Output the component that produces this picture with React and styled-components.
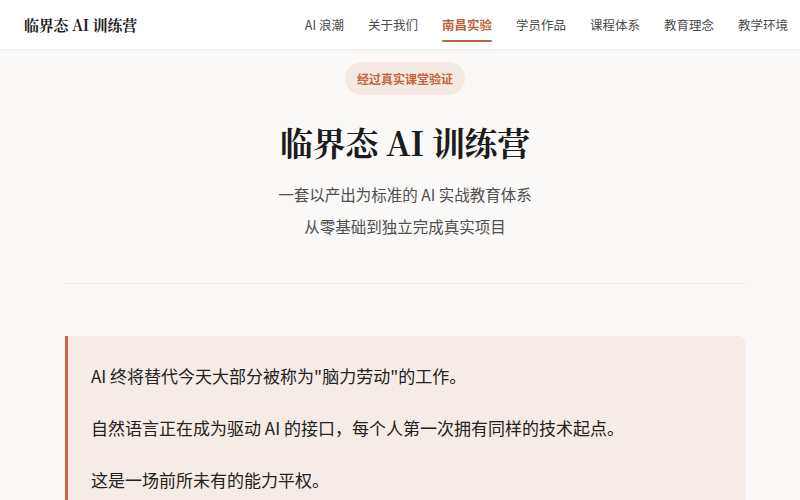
import React from "react";
import styled, { createGlobalStyle } from "styled-components";

const Global = createGlobalStyle`
  html, body { margin: 0; padding: 0; }
  body {
    background: #faf9f8;
    font-family: "Noto Sans CJK SC", "Noto Sans", sans-serif;
    color: #222;
  }
`;

const Header = styled.header`
  height: 50px;
  background: #ffffff;
  border-bottom: 1px solid #eeeceb;
  box-shadow: 0 1px 4px rgba(0,0,0,0.03);
  display: flex;
  align-items: center;
  justify-content: space-between;
  padding: 0 12px 0 24px;
  box-sizing: border-box;
`;

const Logo = styled.div`
  font-family: "Noto Serif CJK SC", "Liberation Serif", "Noto Sans CJK SC", serif;
  font-weight: 700;
  font-size: 15px;
  color: #1c1c1c;
  letter-spacing: -0.2px;
`;

const Nav = styled.nav`
  display: flex;
  align-items: center;
  gap: 24px;
  height: 100%;
`;

const NavItem = styled.a`
  position: relative;
  font-size: 12.5px;
  color: ${p => (p.$active ? "#c0653c" : "#4a4a4a")};
  font-weight: ${p => (p.$active ? 700 : 400)};
  text-decoration: none;
  line-height: 20px;
  &::after {
    content: "";
    display: ${p => (p.$active ? "block" : "none")};
    position: absolute;
    left: 0;
    right: 0;
    bottom: -7px;
    height: 2px;
    background: #c0653c;
    border-radius: 1px;
  }
`;

const Main = styled.main`
  padding-left: 10px;
`;

const Container = styled.div`
  max-width: 680px;
  margin: 0 auto;
  display: flex;
  flex-direction: column;
  align-items: center;
`;

const Badge = styled.div`
  margin-top: 12px;
  padding: 8px 12px;
  font-size: 12px;
  line-height: 17px;
  font-weight: 700;
  color: #c0653c;
  background: #f6e9e2;
  border-radius: 17px;
`;

const Title = styled.h1`
  margin: 25px 0 0;
  font-family: "Noto Serif CJK SC", "Liberation Serif", "Noto Sans CJK SC", serif;
  font-size: 33px;
  line-height: 43px;
  font-weight: 700;
  color: #1c1c1c;
  letter-spacing: -0.3px;
`;

const Subtitle = styled.p`
  margin: 15px 0 0;
  font-size: 15.5px;
  line-height: 32px;
  color: #4f4f4f;
  text-align: center;
`;

const Divider = styled.hr`
  align-self: stretch;
  margin: 41px 0 0;
  border: 0;
  height: 1px;
  background: #eeecea;
`;

const Card = styled.section`
  align-self: stretch;
  margin-top: 52px;
  background: #f5ece7;
  border-left: 3px solid #c0653c;
  border-radius: 0 6px 6px 0;
  padding: 24px 24px 10px 23px;
`;

const Para = styled.p`
  margin: 0 0 21px;
  font-size: 17px;
  line-height: 31px;
  color: #222;
`;

const navItems = ["AI 浪潮", "关于我们", "南昌实验", "学员作品", "课程体系", "教育理念", "教学环境"];

export default function App() {
  return (
    <>
      <Global />
      <Header>
        <Logo>临界态 AI 训练营</Logo>
        <Nav>
          {navItems.map(n => (
            <NavItem key={n} href="#" $active={n === "南昌实验"}>{n}</NavItem>
          ))}
        </Nav>
      </Header>
      <Main>
        <Container>
          <Badge>经过真实课堂验证</Badge>
          <Title>临界态 AI 训练营</Title>
          <Subtitle>
            一套以产出为标准的 AI 实战教育体系
            <br />
            从零基础到独立完成真实项目
          </Subtitle>
          <Divider />
          <Card>
            <Para>AI 终将替代今天大部分被称为"脑力劳动"的工作。</Para>
            <Para>自然语言正在成为驱动 AI 的接口，每个人第一次拥有同样的技术起点。</Para>
            <Para>这是一场前所未有的能力平权。</Para>
          </Card>
        </Container>
      </Main>
    </>
  );
}
